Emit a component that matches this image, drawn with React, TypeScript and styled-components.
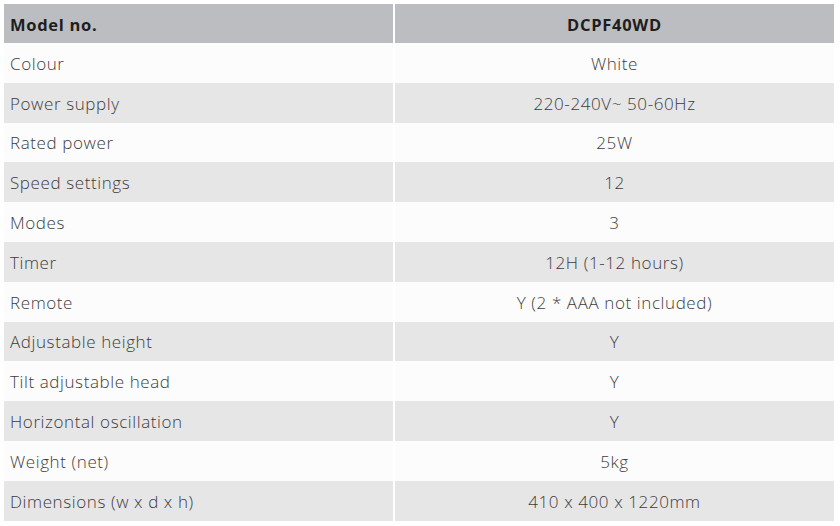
import React from 'react'
import styled, { createGlobalStyle } from 'styled-components'

const specs: [string, string][] = [
  ['Colour', 'White'],
  ['Power supply', '220-240V~ 50-60Hz'],
  ['Rated power', '25W'],
  ['Speed settings', '12'],
  ['Modes', '3'],
  ['Timer', '12H (1-12 hours)'],
  ['Remote', 'Y (2 * AAA not included)'],
  ['Adjustable height', 'Y'],
  ['Tilt adjustable head', 'Y'],
  ['Horizontal oscillation', 'Y'],
  ['Weight (net)', '5kg'],
  ['Dimensions (w x d x h)', '410 x 400 x 1220mm'],
]

const GlobalStyle = createGlobalStyle`
  *, *::before, *::after { box-sizing: border-box; }
  body {
    margin: 0;
    background: #fff;
    font-family: "Open Sans", "Liberation Sans", sans-serif;
  }
`

const Page = styled.div`
  padding: 4px 6px 0 4px;
`

const Table = styled.div`
  display: grid;
  grid-template-columns: 389px 1fr;
  column-gap: 2px;
`

const Cell = styled.div<{ $tone: 'head' | 'light' | 'dark'; $center?: boolean }>`
  height: ${p => (p.$tone === 'head' ? '39px' : '39.8px')};
  display: flex;
  align-items: center;
  justify-content: ${p => (p.$center ? 'center' : 'flex-start')};
  padding: 1px 6px 0;
  background: ${p =>
    p.$tone === 'head' ? '#bcbdc0' : p.$tone === 'dark' ? '#e6e6e7' : '#fcfcfc'};
  color: ${p => (p.$tone === 'head' ? '#1e1e1e' : '#3c3c3c')};
  font-size: ${p => (p.$tone === 'head' ? '16.5px' : '17px')};
  font-weight: ${p => (p.$tone === 'head' ? 700 : 300)};
  letter-spacing: ${p => (p.$tone === 'head' ? '0.7px' : '0.6px')};
  white-space: nowrap;
`

export default function App() {
  return (
    <Page>
      <GlobalStyle />
      <Table>
        <Cell $tone="head">Model no.</Cell>
        <Cell $tone="head" $center>DCPF40WD</Cell>
        {specs.map(([label, value], i) => {
          const tone = i % 2 === 0 ? 'light' : 'dark'
          return (
            <React.Fragment key={label}>
              <Cell $tone={tone}>{label}</Cell>
              <Cell $tone={tone} $center>{value}</Cell>
            </React.Fragment>
          )
        })}
      </Table>
    </Page>
  )
}
